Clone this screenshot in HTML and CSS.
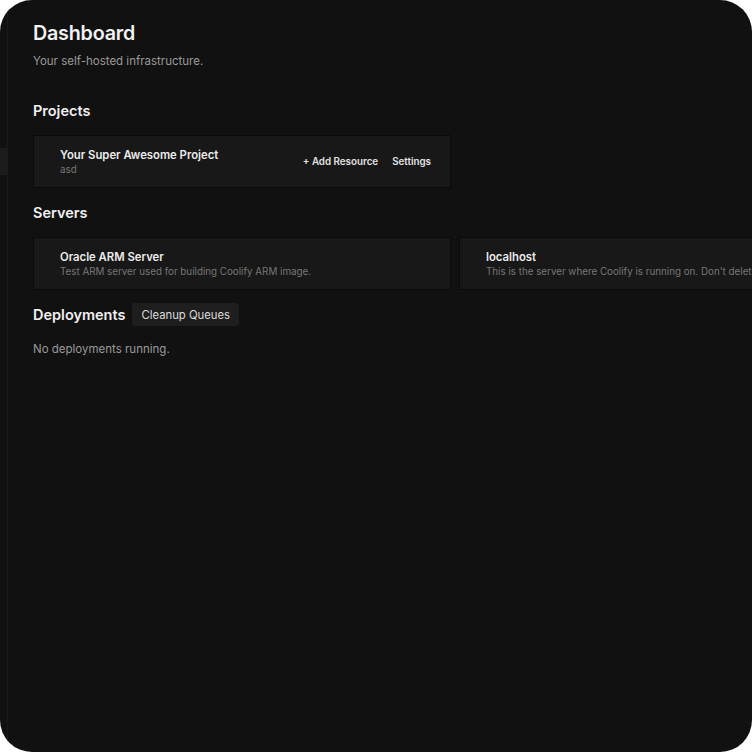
FILE: index.html
```html
<!DOCTYPE html>
<html>
<head>
<meta charset="utf-8">
<link rel="stylesheet" href="styles.css">
</head>
<body>
<div class="window">
  <aside class="sidebar"><div class="side-item"></div></aside>
  <main class="main">
    <h1 class="title">Dashboard</h1>
    <p class="subtitle">Your self-hosted infrastructure.</p>

    <h2 class="section">Projects</h2>
    <div class="grid">
      <div class="card project">
        <div class="card-text">
          <div class="card-name">Your Super Awesome Project</div>
          <div class="card-desc">asd</div>
        </div>
        <div class="actions">
          <span class="action">+ Add Resource</span>
          <span class="action">Settings</span>
        </div>
      </div>
    </div>

    <h2 class="section">Servers</h2>
    <div class="grid">
      <div class="card">
        <div class="card-text">
          <div class="card-name">Oracle ARM Server</div>
          <div class="card-desc">Test ARM server used for building Coolify ARM image.</div>
        </div>
      </div>
      <div class="card">
        <div class="card-text">
          <div class="card-name">localhost</div>
          <div class="card-desc">This is the server where Coolify is running on. Don't delete this!</div>
        </div>
      </div>
    </div>

    <div class="deploy-head">
      <h2 class="section inline">Deployments</h2>
      <button class="btn">Cleanup Queues</button>
    </div>
    <p class="empty">No deployments running.</p>
  </main>
</div>
</body>
</html>
```
FILE: styles.css
```css
html, body {
  margin: 0;
  padding: 0;
  background: #ffffff;
}
body {
  font-family: Inter, "Noto Sans", sans-serif;
}
.window {
  width: 752px;
  height: 752px;
  background: #111111;
  border-radius: 32px;
  overflow: hidden;
  display: flex;
}
.sidebar {
  width: 7px;
  flex: none;
  border-right: 1px solid #1a1a1a;
  padding-top: 148px;
}
.side-item {
  height: 27px;
  background: #1c1c1c;
}
.main {
  flex: 1;
  min-width: 0;
  padding: 21px 0 0 25px;
  overflow: hidden;
}
.title {
  margin: 0;
  font-size: 19.7px;
  font-weight: 600;
  line-height: 24px;
  color: #f2f2f2;
  letter-spacing: -0.2px;
}
.subtitle {
  margin: 8px 0 0;
  font-size: 11.5px;
  line-height: 16px;
  color: #9a9a9a;
}
.section {
  margin: 32px 0 0;
  font-size: 14.5px;
  font-weight: 600;
  line-height: 20px;
  color: #f0f0f0;
}
.grid {
  margin-top: 14px;
  display: grid;
  grid-template-columns: 418px 418px;
  gap: 8px;
}
.card {
  height: 53px;
  box-sizing: border-box;
  background: #181818;
  border: 1px solid #0a0a0a;
  display: flex;
  align-items: center;
  padding: 0 19px 0 26px;
}
.card-text {
  flex: 1;
  min-width: 0;
  white-space: nowrap;
}
.card-name {
  font-size: 11.3px;
  font-weight: 600;
  line-height: 15px;
  color: #ececec;
}
.card-desc {
  font-size: 9.8px;
  line-height: 13px;
  color: #777777;
  overflow: hidden;
}
.actions {
  display: flex;
  gap: 14px;
}
.action {
  font-size: 9.8px;
  font-weight: 600;
  color: #e2e2e2;
}
.grid + .section {
  margin-top: 15px;
}
.deploy-head {
  margin-top: 13px;
  display: flex;
  align-items: center;
  gap: 7px;
}
.section.inline {
  margin: 0;
}
.btn {
  font-family: inherit;
  font-size: 11.3px;
  color: #dcdcdc;
  background: #1e1e1e;
  border: none;
  border-radius: 3px;
  height: 23px;
  padding: 0 9px;
}
.empty {
  margin: 15px 0 0;
  font-size: 11.5px;
  line-height: 16px;
  color: #9a9a9a;
}
```
